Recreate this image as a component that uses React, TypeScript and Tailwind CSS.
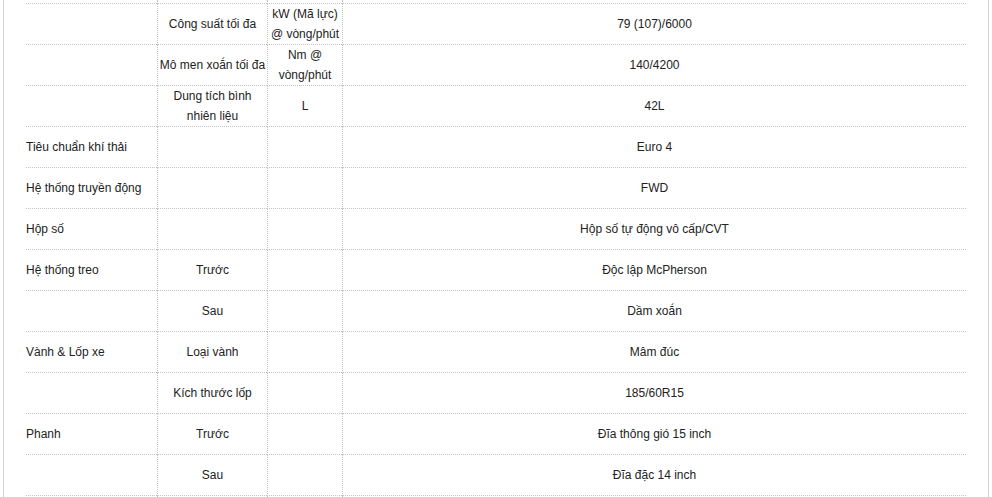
import React from "react";

const rows: [string, string, string, string][] = [
  ["", "Công suất tối đa", "kW (Mã lực) @ vòng/phút", "79 (107)/6000"],
  ["", "Mô men xoắn tối đa", "Nm @ vòng/phút", "140/4200"],
  ["", "Dung tích bình nhiên liệu", "L", "42L"],
  ["Tiêu chuẩn khí thải", "", "", "Euro 4"],
  ["Hệ thống truyền động", "", "", "FWD"],
  ["Hộp số", "", "", "Hộp số tự động vô cấp/CVT"],
  ["Hệ thống treo", "Trước", "", "Độc lập McPherson"],
  ["", "Sau", "", "Dầm xoắn"],
  ["Vành & Lốp xe", "Loại vành", "", "Mâm đúc"],
  ["", "Kích thước lốp", "", "185/60R15"],
  ["Phanh", "Trước", "", "Đĩa thông gió 15 inch"],
  ["", "Sau", "", "Đĩa đặc 14 inch"],
];

function Row({ cells, h }: { cells: [string, string, string, string]; h: string }) {
  const base = "border-b border-dotted border-[#c4c4c4] flex items-center " + h;
  return (
    <>
      <div className={base + " justify-start text-left"}>{cells[0]}</div>
      <div className={base + " border-l justify-center text-center"}>{cells[1]}</div>
      <div className={base + " border-l justify-center text-center"}>{cells[2]}</div>
      <div className={base + " border-l justify-center text-center"}>{cells[3]}</div>
    </>
  );
}

export default function App() {
  return (
    <div className="w-[992px] h-[497px] overflow-hidden bg-white">
      <div className="ml-[3px] w-[986px] h-[497px] border-x border-[#d4d4d4] pl-[22px] text-[12px] leading-[20px] text-[#222]" style={{ fontFamily: '"Liberation Sans", Arial, sans-serif' }}>
        <div className="grid grid-cols-[131px_110px_75px_624px] w-[940px]">
          <Row cells={["", "", "", ""]} h="h-[4px]" />
          {rows.map((r, i) => (
            <Row key={i} cells={r} h="h-[41px]" />
          ))}
          <Row cells={["", "", "", ""]} h="h-[41px]" />
        </div>
      </div>
    </div>
  );
}
